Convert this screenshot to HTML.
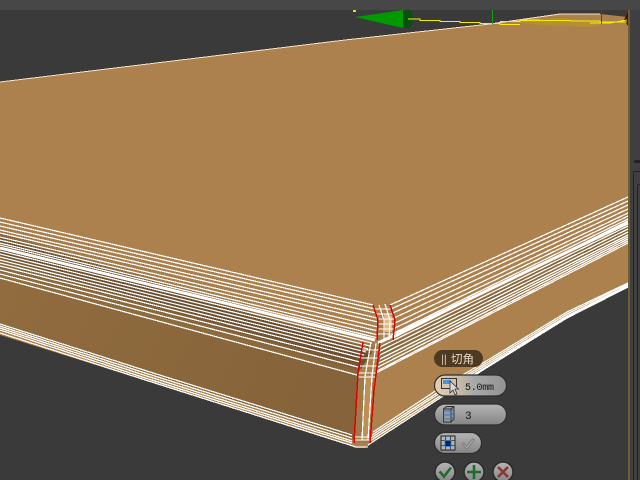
<!DOCTYPE html>
<html>
<head>
<meta charset="utf-8">
<style>
html,body{margin:0;padding:0;width:640px;height:480px;overflow:hidden;background:#3a3a3a}
svg{display:block;position:absolute;left:0;top:0}
text{font-family:"Liberation Sans","Noto Sans CJK SC",sans-serif}
</style>
</head>
<body>
<svg width="640" height="480" viewBox="0 0 640 480" xmlns="http://www.w3.org/2000/svg">
<defs>
<linearGradient id="front" gradientUnits="userSpaceOnUse" x1="0" y1="280" x2="300" y2="420"><stop offset="0" stop-color="#916c3f"/><stop offset="1" stop-color="#86633a"/></linearGradient>
<linearGradient id="bevL" gradientUnits="userSpaceOnUse" x1="100" y1="240" x2="80" y2="305"><stop offset="0" stop-color="#ad814d"/><stop offset=".3" stop-color="#a67c4a"/><stop offset=".42" stop-color="#6e5030"/><stop offset=".6" stop-color="#6e5030"/><stop offset=".75" stop-color="#8a683c"/><stop offset="1" stop-color="#93703f"/></linearGradient>
<linearGradient id="bevR" gradientUnits="userSpaceOnUse" x1="500" y1="260" x2="525" y2="310"><stop offset="0" stop-color="#ad814d"/><stop offset=".38" stop-color="#ad814d"/><stop offset=".5" stop-color="#86653a"/><stop offset=".72" stop-color="#a07848"/><stop offset="1" stop-color="#ad814d"/></linearGradient>
<linearGradient id="btn" x1="0" y1="0" x2="0" y2="1"><stop offset="0" stop-color="#b5b5b5"/><stop offset="1" stop-color="#858585"/></linearGradient>
<linearGradient id="btnH" x1="0" y1="0" x2="1" y2="0"><stop offset="0" stop-color="#e2cfb4"/><stop offset=".3" stop-color="#cfbfa8"/><stop offset=".55" stop-color="#a8a8a8"/><stop offset="1" stop-color="#929292"/></linearGradient>
</defs>

<rect width="640" height="480" fill="#3a3a3a"/>
<rect width="640" height="10" fill="#474747"/>

<!-- solid body -->
<polygon fill="#ad814d" points="0,82 345,40 490,24 560,14 600,14 628,17 628,287 567,318 483,370 437,400 370,444 366,448 356,448 350,445 150,382 0,335"/>
<polygon fill="url(#front)" points="0,278 357,375 354,440 0,326"/>
<polygon fill="url(#bevL)" points="0,218 373,305 380,340 357,375 0,278"/>
<polygon fill="url(#bevR)" points="628,197 390,305 376,373 628,243"/>
<polygon fill="#a07a48" points="358,373 376,373 370,443 354,443"/>
<polygon fill="#bf9055" points="365,375 372,375 368,440 362,440"/>
<polygon fill="#e6b685" points="384,314 392,316 392,332 385,332"/>

<!-- top edge highlight -->
<polyline fill="none" stroke="#f4e2c8" stroke-width="1" shape-rendering="crispEdges" points="0,82 345,40 490,24 560,14 600,14"/>

<!-- gizmo -->
<polygon fill="#b59030" points="515,22 560,18 610,22 590,27 540,25"/>
<polygon fill="#009a00" points="355,17 403,10 403,28"/>
<ellipse cx="408" cy="19" rx="5" ry="9.500" fill="#0a4f10"/>
<polygon fill="#4f0707" points="628,12 628,26 624,20"/>
<g shape-rendering="crispEdges">
<path d="M408 19H420V20.500H440V21.500H460V22.500H480V23.500H500V24.500H520M500 21.500H520V20.500H570V21H600V22H627M520 20H540M590 23H610L627 20" fill="none" stroke="#f5ee00" stroke-width="1"/>
<rect x="353" y="10" width="3" height="2" fill="#e8e000"/>
<rect x="492" y="10" width="1" height="14" fill="#1a9a1a"/>
<rect x="601" y="10" width="1" height="14" fill="#c81010"/>
</g>

<!-- wire lines -->
<g fill="none" stroke="#fff" stroke-width="1.250" shape-rendering="crispEdges">
<path d="M0 218L373 305M0 222L375 309M0 226L376 313M0 230L377 318M0 233L378 322M0 237L378 327M0 240L378 331M0 243L378 335M0 245L378 338"/>
<path d="M0 251L372 343M0 254L370 346M0 257L368 349M0 260L366 352M0 263L364 355M0 266L362 358M0 270L360 362M0 274L358 367M0 278L357 375"/>
<path d="M628 197L390 305M628 201L391 309M628 205L393 313M628 209L394 318M628 213L395 323M628 216L395 328M628 219L394 333M628 221L393 338"/>
<path d="M628 226L380 347M628 229L380 351M628 232L380 355M628 235L380 359M628 237L379 363M628 239L378 367M628 241L377 371M628 243L376 373"/>
<path d="M0 324L150 372L352 435M0 326L150 374.500L352 438M0 328L150 377L352 441M0 330L150 379.500L352 443M0 333L150 381.500L356 447H368"/>
<path d="M373 432L437 390L483 363L567 312L628 283M372 435L437 393L483 365L567 314L628 284M371 438L437 395L483 367L567 316L628 285.500M370 441L437 398L483 369L567 317L628 286.500M368 445L437 400L483 370L567 318L628 287"/>
<!-- corner wires -->
<path d="M379 305L384 320L384 340M385 304L390 320L389 340M374 309L391 309M376 314L393 314M377 319L395 319M378 324L395 324M378 329L395 329M378 334L394 334"/>
<path d="M371 342L365 377L362 440M376 343L372 377L368 440M362 350L379 350M360 358L378 358M359 366L377 366M358 373L376 373M358 377L376 377M355 437L371 437M355 440L371 440"/>
</g>
<path d="M0 248L200 297L375 340" fill="none" stroke="#fff" stroke-width="3"/>
<path d="M628 223L540 265L378 343" fill="none" stroke="#fff" stroke-width="3"/>
<g fill="none" stroke="#e00000" stroke-width="1.500" shape-rendering="crispEdges">
<path d="M373 305L378 320L377 340"/>
<path d="M390 305L395 320L393 340"/>
<path d="M363 342L358 373L354 443"/>
<path d="M380 343L374 390L370 443"/>
</g>

<!-- right panel -->
<rect x="630" y="10" width="10" height="470" fill="#3f3f3f"/>
<rect x="628" y="10" width="2" height="470" fill="#6c5d32"/>
<rect x="634" y="160" width="6" height="3" fill="#222"/>
<path d="M633.500 172V480M633.500 171.500H640M637.500 185V480M637.500 184.500H640" fill="none" stroke="#222" shape-rendering="crispEdges"/>

<!-- floating caddy -->
<rect x="434" y="350" width="49" height="17" rx="8.500" fill="#4e3a20"/>
<text x="441" y="362.500" font-size="11" fill="#d8cdb8">||</text>
<text x="451" y="363" font-size="11.500" fill="#e4dccb">切角</text>

<rect x="434.500" y="375" width="72" height="21" rx="10.500" fill="url(#btnH)" stroke="#2e2e2e" stroke-width="1.200"/>
<rect x="441.500" y="378.500" width="15" height="10" fill="none" stroke="#333"/>
<rect x="443" y="380" width="8" height="4" fill="#4f8fdc"/>
<text x="465" y="390" font-size="10" textLength="29" style="font-family:'Liberation Mono',monospace" fill="#151515">5.0mm</text>
<path d="M450 381V393L453 390L455 395L457 394L455 389L458.500 389Z" fill="#d8d8d8" stroke="#333" stroke-width=".8"/>

<rect x="434.500" y="404" width="72" height="21" rx="10.500" fill="url(#btn)" stroke="#2e2e2e" stroke-width="1.200"/>
<path d="M443.500 409L446.500 406.500H454V419L451 422H443.500Z" fill="#9c9c9c" stroke="#333"/>
<path d="M443.500 409H451V422M451 409L454 406.500" fill="none" stroke="#333"/>
<path d="M443.500 411H451L454 409M443.500 415H451L454 413M443.500 419H451L454 417" fill="none" stroke="#2f74c8" stroke-width="1.100"/>
<text x="465" y="419" font-size="11" style="font-family:'Liberation Mono',monospace" fill="#151515">3</text>

<rect x="434.500" y="432.500" width="47" height="21" rx="10.500" fill="url(#btn)" stroke="#2e2e2e" stroke-width="1.200"/>
<rect x="441" y="436" width="14" height="14" fill="#b5b5b5" stroke="#222"/>
<path d="M445.500 436V450M450.500 436V450M441 440.500H455M441 445.500H455" stroke="#333" fill="none" stroke-width=".8"/>
<rect x="445" y="440.500" width="6" height="6" fill="#06224a" stroke="#2f74c8"/>
<path d="M463.500 443L466.500 446L472.500 438.500L474.500 440L467 449L462 444.500Z" fill="#a5a5a5" stroke="#777" stroke-width=".8"/>

<circle cx="445" cy="472" r="10" fill="url(#btn)" stroke="#2a2a2a" stroke-width="1.500"/>
<path d="M439.500 471.500L444 476.500L451 467.500" fill="none" stroke="#1d6b2e" stroke-width="2.600"/>
<circle cx="474" cy="472" r="10" fill="url(#btn)" stroke="#2a2a2a" stroke-width="1.500"/>
<path d="M474 465V479M467 472H481" fill="none" stroke="#1d6b2e" stroke-width="2.600"/>
<circle cx="503" cy="472" r="10" fill="url(#btn)" stroke="#2a2a2a" stroke-width="1.500"/>
<path d="M498 467L508 477M508 467L498 477" fill="none" stroke="#8e3434" stroke-width="2.600"/>
</svg>
</body>
</html>
